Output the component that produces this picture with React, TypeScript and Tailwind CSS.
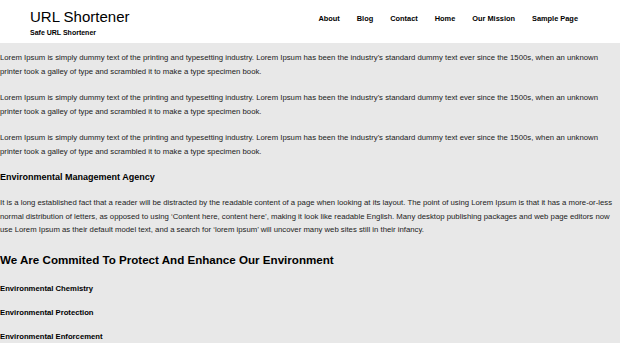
const lorem =
  "Lorem Ipsum is simply dummy text of the printing and typesetting industry. Lorem Ipsum has been the industry's standard dummy text ever since the 1500s, when an unknown printer took a galley of type and scrambled it to make a type specimen book."

const nav = ["About", "Blog", "Contact", "Home", "Our Mission", "Sample Page"]

export default function App() {
  return (
    <div className="min-h-[343px] bg-[#e8e8e8] font-['Liberation_Sans',Arial,sans-serif] text-[#222]">
      {/* Header */}
      <header className="bg-white h-[43px] flex items-start justify-between pl-[30px] pr-[42px]">
        <div className="pt-[8px]">
          <h1 className="text-[15px] leading-[18px] text-black">URL Shortener</h1>
          <p className="text-[7px] leading-[9px] font-bold mt-[2px] text-black">Safe URL Shortener</p>
        </div>
        <nav className="flex gap-[17px] pt-[13px] text-[7.4px] font-bold text-black">
          {nav.map((n) => (
            <a key={n} href="#">
              {n}
            </a>
          ))}
        </nav>
      </header>

      <main className="pt-[8px] text-[7.75px] leading-[13.5px]">
        <p className="mb-[13px]">{lorem}</p>
        <p className="mb-[13px]">{lorem}</p>
        <p className="mb-[13px]">{lorem}</p>

        <h3 className="text-[9px] font-bold leading-[13px] mt-[1px] mb-[12px] text-black">
          Environmental Management Agency
        </h3>
        <p className="mb-[15px]">
          It is a long established fact that a reader will be distracted by the readable content of a page when
          looking at its layout. The point of using Lorem Ipsum is that it has a more-or-less normal distribution of
          letters, as opposed to using ‘Content here, content here’, making it look like readable English. Many
          desktop publishing packages and web page editors now use Lorem Ipsum as their default model text, and a
          search for ‘lorem ipsum’ will uncover many web sites still in their infancy.
        </p>

        <h2 className="text-[11.6px] font-bold leading-[16px] mb-[14px] text-black">
          We Are Commited To Protect And Enhance Our Environment
        </h2>
        <div className="flex flex-col gap-[11px] text-[7.7px] font-bold leading-[13px] text-black">
          <h4>Environmental Chemistry</h4>
          <h4>Environmental Protection</h4>
          <h4>Environmental Enforcement</h4>
        </div>
      </main>
    </div>
  )
}
